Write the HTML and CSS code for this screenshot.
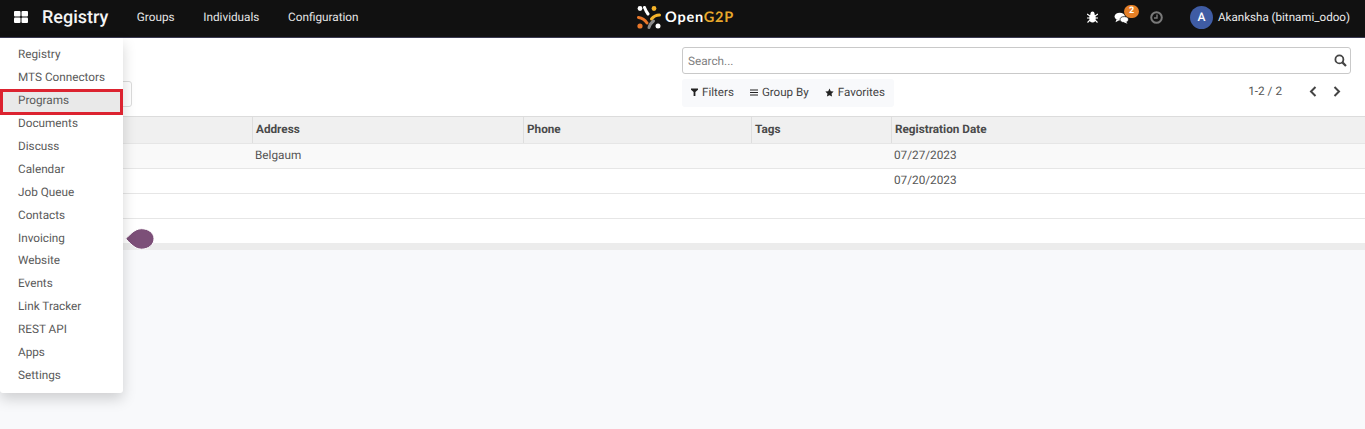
FILE: index.html
```html
<!DOCTYPE html>
<html lang="en">
<head>
<meta charset="utf-8">
<title>Registry</title>
<link rel="stylesheet" href="styles.css">
</head>
<body>
<header class="navbar">
  <div class="nav-left">
    <svg class="apps-icon" width="14" height="12" viewBox="0 0 14 12"><rect x="0" y="0" width="6.5" height="5.5" rx="1"/><rect x="7.5" y="0" width="6.5" height="5.5" rx="1"/><rect x="0" y="6.5" width="6.5" height="5.5" rx="1"/><rect x="7.5" y="6.5" width="6.5" height="5.5" rx="1"/></svg>
    <span class="brand">Registry</span>
    <nav class="nav-links"><span>Groups</span><span>Individuals</span><span>Configuration</span></nav>
  </div>
  <div class="logo">
    <svg width="24" height="24" viewBox="0 0 24 24" fill="none" stroke-linecap="round">
      <circle cx="3" cy="2.5" r="2.4" fill="#fff"/>
      <path d="M7.5 1.5 C8.5 4 9.5 6 11 8" stroke="#fff" stroke-width="3"/>
      <circle cx="17" cy="2.5" r="2.4" fill="#f5b32a"/>
      <path d="M22.5 9 C19 9 16.5 10.5 14.5 13" stroke="#f5b32a" stroke-width="3"/>
      <path d="M1.5 11.5 C5 12 8 14 10 17" stroke="#e8772a" stroke-width="3"/>
      <circle cx="3" cy="20" r="2.6" fill="#e8772a"/>
      <path d="M12 21.5 C12.5 19 14 17 16.5 15" stroke="#8a8a8a" stroke-width="3"/>
      <circle cx="21" cy="20" r="2.5" fill="#fff"/>
    </svg>
    <span class="logo-text">Open<b>G2P</b></span>
  </div>
  <div class="nav-right">
    <svg class="bug" width="11" height="12" viewBox="0 0 11 12" fill="#fff"><ellipse cx="5.5" cy="7" rx="3.2" ry="4.5"/><circle cx="5.5" cy="2.4" r="2"/><path d="M0 3 L3 5 M11 3 L8 5 M0 7 H3 M11 7 H8 M0.5 11.5 L3 9 M10.5 11.5 L8 9" stroke="#fff" stroke-width="1.1"/></svg>
    <span class="chat">
      <svg width="15" height="12" viewBox="0 0 15 13" fill="#fff"><ellipse cx="5.6" cy="5" rx="5.6" ry="4.2"/><path d="M2 8 L1 11 L5 9 Z"/><ellipse cx="10.5" cy="8.2" rx="4.5" ry="3.2" stroke="#111" stroke-width=".8"/><path d="M12.5 10.5 L14 12.8 L10 11 Z"/></svg>
      <span class="badge">2</span>
    </span>
    <svg class="clock" width="13" height="13" viewBox="0 0 13 13" fill="none" stroke="#7a7a7a" stroke-width="2"><circle cx="6.5" cy="6.5" r="5.3"/><path d="M7 3.5 V7 H4" stroke-width="1.4"/></svg>
    <span class="avatar">A</span>
    <span class="user">Akanksha (bitnami_odoo)</span>
  </div>
</header>
<main class="content">
  <section class="control">
    <div class="ctrl-left"><span class="ghost-btn"></span></div>
    <div class="ctrl-right">
      <div class="search"><span class="placeholder">Search...</span>
        <svg width="13" height="13" viewBox="0 0 13 13" fill="none" stroke="#444" stroke-width="1.8"><circle cx="5.4" cy="5.4" r="4"/><path d="M8.4 8.4 L12 12" stroke-width="2.2"/></svg>
      </div>
      <div class="ctrl-row">
        <div class="filters">
          <span class="filter"><svg width="7" height="8" viewBox="0 0 7 8" fill="#222"><path d="M0 0.5 H7 V1.8 L4.4 4 V8 H2.6 V4 L0 1.8 Z"/></svg>Filters</span>
          <span class="filter"><svg width="8" height="7" viewBox="0 0 8 7" fill="#222"><rect y="0.5" width="8" height="1"/><rect y="3" width="8" height="1"/><rect y="5.5" width="8" height="1"/></svg>Group By</span>
          <span class="filter"><svg width="9" height="9" viewBox="0 0 24 24" fill="#222"><path d="M12 1.5 L15.4 8.6 L23 9.6 L17.4 15 L18.9 22.7 L12 19 L5.1 22.7 L6.6 15 L1 9.6 L8.6 8.6 Z"/></svg>Favorites</span>
        </div>
        <div class="pager">
          <span class="count">1-2 / 2</span>
          <svg width="8" height="11" viewBox="0 0 8 11" fill="none" stroke="#444" stroke-width="2"><path d="M6.5 1 L2 5.5 L6.5 10"/></svg>
          <svg width="8" height="11" viewBox="0 0 8 11" fill="none" stroke="#444" stroke-width="2"><path d="M1.5 1 L6 5.5 L1.5 10"/></svg>
        </div>
      </div>
    </div>
  </section>
  <section class="table">
    <div class="row head"><span class="c1"></span><span class="c2">Address</span><span class="c3">Phone</span><span class="c4">Tags</span><span class="c5">Registration Date</span></div>
    <div class="row"><span class="c1"></span><span class="c2">Belgaum</span><span class="c3"></span><span class="c4"></span><span class="c5">07/27/2023</span></div>
    <div class="row"><span class="c1"></span><span class="c2"></span><span class="c3"></span><span class="c4"></span><span class="c5">07/20/2023</span></div>
    <div class="row"></div>
    <div class="row blank"></div>
  </section>
  <div class="scrollbar"></div>
</main>
<svg class="drop" width="30" height="22" viewBox="0 0 30 22"><path d="M0.7 10.8 C4 8 9 0.7 16.5 0.7 C23.5 0.7 29 5 29 10.8 C29 16.6 23.5 21.2 16.5 21.2 C9 21.2 4 13.5 0.7 10.8 Z" fill="#7c4f78" stroke="#fff" stroke-width="1"/></svg>
<aside class="app-menu">
  <a>Registry</a><a>MTS Connectors</a><a class="active">Programs</a><a>Documents</a><a>Discuss</a><a>Calendar</a><a>Job Queue</a><a>Contacts</a><a>Invoicing</a><a>Website</a><a>Events</a><a>Link Tracker</a><a>REST API</a><a>Apps</a><a>Settings</a>
</aside>
</body>
</html>
```
FILE: styles.css
```css
*, *::after { box-sizing: border-box; }
html, body { margin: 0; height: 429px; overflow: hidden; }
body { font-family: Roboto, "Liberation Sans", sans-serif; font-size: 11.75px; color: #4c4c4c; background: #f8f9fb; position: relative; text-rendering: geometricPrecision; }

.navbar { height: 38px; background: #111; border-bottom: 1px solid #3a3a52; display: grid; grid-template-columns: 1fr auto 1fr; align-items: center; color: #fff; padding: 0 15px 3px 14px; }
.nav-left { display: flex; align-items: center; }
.apps-icon { fill: #fff; }
.brand { font-size: 18px; font-weight: 500; margin-left: 14px; color: #f4f4f4; }
.nav-links { display: flex; gap: 28.7px; margin-left: 28.5px; color: #e6e6e6; }
.logo { display: flex; align-items: center; gap: 4px; margin: 0 0 -1px 7px; }
.logo-text { font-family: Lato, Roboto, sans-serif; font-weight: 700; font-size: 14.5px; letter-spacing: .75px; color: #fff; }
.logo-text b { color: #e9a92b; font-weight: 700; }
.nav-right { display: flex; align-items: center; justify-content: flex-end; }
.chat { position: relative; display: flex; margin-left: 16px; top: 1px; }
.badge { position: absolute; left: 10px; top: -7px; width: 15px; height: 13px; border-radius: 7px; background: #e57f26; color: #fff; font-size: 9px; font-weight: 700; line-height: 13px; text-align: center; }
.clock { margin-left: 21px; }
.avatar { width: 23px; height: 23px; border-radius: 50%; background: #3f5ca4; color: #fff; font-size: 12px; font-weight: 500; line-height: 23px; text-align: center; margin-left: 27px; }
.user { margin-left: 5px; color: #ececec; font-size: 11.6px; }

.content { display: block; }
.control { height: 78px; background: #fff; display: flex; justify-content: space-between; padding: 9px 14px 0 0; }
.ctrl-left { width: 132px; padding-top: 34px; }
.ghost-btn { display: block; height: 26px; width: 100%; border: 1px solid #dcdcdc; border-radius: 3px; }
.ctrl-right { width: 669px; }
.search { height: 27px; border: 1px solid #c9c9c9; border-radius: 3px; display: flex; align-items: center; justify-content: space-between; padding: 0 3px 0 5px; color: #7f7f7f; }
.ctrl-row { display: flex; justify-content: space-between; align-items: flex-start; margin-top: 5px; }
.filters { height: 28px; width: 212px; background: #f8f9fb; border-radius: 3px; display: flex; align-items: center; gap: 16px; padding: 0 9px 2px; color: #444; font-size: 11.6px; }
.filter { display: flex; align-items: center; gap: 4px; white-space: nowrap; }
.pager { display: flex; align-items: center; height: 24px; color: #555; margin-right: 10px; }
.count { margin-right: 27px; }
.pager svg + svg { margin-left: 16px; }

.table { background: #fff; }
.row { display: grid; grid-template-columns: 252px 271px 228px 140px 1fr; height: 25px; align-items: center; padding-bottom: 2px; border-bottom: 1px solid #e6e6e6; color: #555; }
.row span { padding-left: 3px; }
.row.head { height: 28px; padding-bottom: 0; background: #f0f0f0; border-top: 1px solid #dcdcdc; border-bottom: 1px solid #e6e6e6; font-weight: 700; color: #4a4a4a; }
.row.head span + span { border-left: 1px solid #dedede; height: 100%; display: flex; align-items: center; padding: 0 0 2px 3px; }
.row:nth-child(2) { background: #f9f9f9; }
.row.blank { height: 24px; border-bottom: 0; }
.scrollbar { height: 7px; background: #ececec; }

.drop { position: absolute; left: 125px; top: 228px; }
.app-menu { position: absolute; left: 0; top: 38px; width: 123px; height: 355px; padding-top: 5px; background: #fff; border-radius: 0 0 3px 3px; box-shadow: 0 6px 14px rgba(0,0,0,.17); display: flex; flex-direction: column; }
.app-menu a { height: 22.95px; line-height: 23px; padding-left: 18px; color: #5a5a5a; white-space: nowrap; position: relative; }
.app-menu a.active { background: #e9e9e9; }
.app-menu a.active::after { content: ""; position: absolute; left: 0; top: 0; width: 123px; height: 26px; border: 3px solid #dc2330; }
```
